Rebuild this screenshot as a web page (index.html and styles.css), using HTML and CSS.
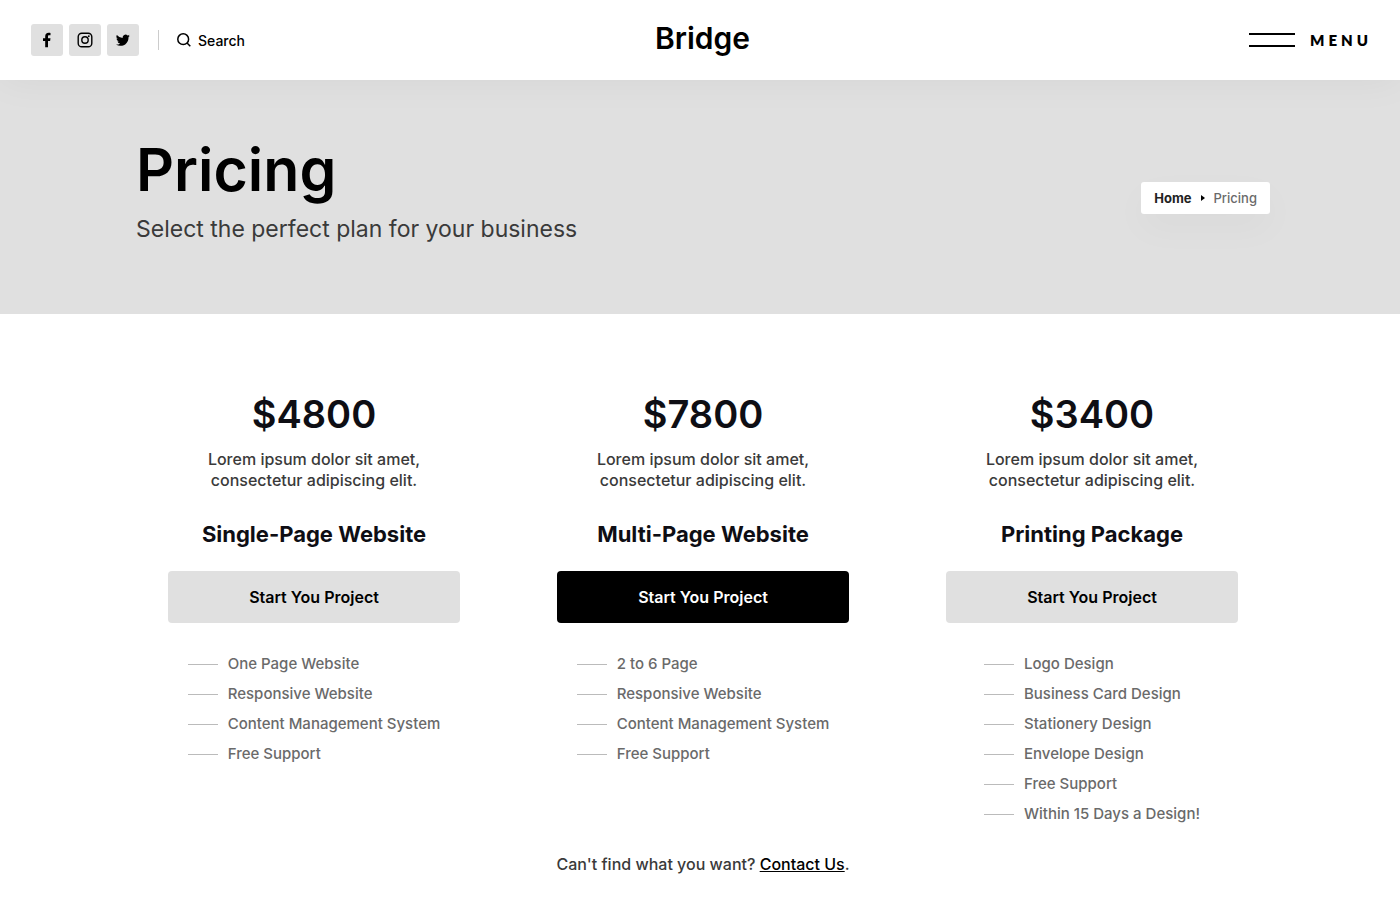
FILE: index.html
```html
<!DOCTYPE html>
<html lang="en">
<head>
<meta charset="utf-8">
<meta name="viewport" content="width=device-width, initial-scale=1">
<title>Pricing – Bridge</title>
<link rel="stylesheet" href="styles.css">
</head>
<body>
<header class="topbar">
  <div class="topbar-left">
    <nav class="social" aria-label="Social media">
      <a href="#" aria-label="Facebook"><svg width="16" height="16" viewBox="0 0 16 16"><path d="M6.200 15.200V9H4V6.300h2.200V4.400C6.200 2 7.500.8 9.600.8c1 0 1.700.1 1.900.1v2.300h-1.300c-1 0-1.200.5-1.200 1.200v1.900h2.500L11.100 9H9v6.200z"/></svg></a>
      <a href="#" aria-label="Instagram"><svg width="16" height="16" viewBox="0 0 16 16"><rect x="1.200" y="1.200" width="13.600" height="13.600" rx="3.600" fill="none" stroke="#000" stroke-width="1.400"/><circle cx="8" cy="8" r="3.200" fill="none" stroke="#000" stroke-width="1.400"/><circle cx="11.800" cy="4.200" r=".9"/></svg></a>
      <a href="#" aria-label="Twitter"><svg width="14" height="14" viewBox="0 0 24 24"><path d="M23.600 4.900a9.700 9.700 0 0 1-2.800.8 4.900 4.900 0 0 0 2.100-2.700 9.700 9.700 0 0 1-3.100 1.200 4.900 4.900 0 0 0-8.300 4.400A13.800 13.800 0 0 1 1.500 3.500a4.900 4.900 0 0 0 1.500 6.500 4.800 4.800 0 0 1-2.200-.6 4.900 4.900 0 0 0 3.900 4.900 4.900 4.900 0 0 1-2.200.1 4.900 4.900 0 0 0 4.600 3.400A9.800 9.800 0 0 1 0 19.800 13.800 13.800 0 0 0 7.500 22c9.100 0 14.200-7.700 13.900-14.600a10 10 0 0 0 2.200-2.500z"/></svg></a>
    </nav>
    <button class="search" type="button"><svg width="14" height="14" viewBox="0 0 14 14" fill="none" stroke="#000" stroke-width="1.500"><circle cx="6.200" cy="6.200" r="5.400"/><path d="M10 10l3.300 3.300"/></svg>Search</button>
  </div>
  <a class="logo" href="#">Bridge</a>
  <button class="menu" type="button"><span class="menu-lines"></span>MENU</button>
</header>
<section class="hero">
  <div class="hero-inner">
    <div>
      <h1>Pricing</h1>
      <p class="subtitle">Select the perfect plan for your business</p>
    </div>
    <nav class="breadcrumb" aria-label="Breadcrumb">
      <a href="#">Home</a>
      <svg width="4" height="6" viewBox="0 0 4 6"><path d="M0 0l4 3-4 3z"/></svg>
      <span>Pricing</span>
    </nav>
  </div>
</section>
<main class="main">
  <div class="plans">
    <article class="plan">
      <p class="price">$4800</p>
      <p class="desc">Lorem ipsum dolor sit amet, consectetur adipiscing elit.</p>
      <h2>Single-Page Website</h2>
      <button class="start" type="button">Start You Project</button>
      <ul>
        <li>One Page Website</li>
        <li>Responsive Website</li>
        <li>Content Management System</li>
        <li>Free Support</li>
      </ul>
    </article>
    <article class="plan">
      <p class="price">$7800</p>
      <p class="desc">Lorem ipsum dolor sit amet, consectetur adipiscing elit.</p>
      <h2>Multi-Page Website</h2>
      <button class="start start-dark" type="button">Start You Project</button>
      <ul>
        <li>2 to 6 Page</li>
        <li>Responsive Website</li>
        <li>Content Management System</li>
        <li>Free Support</li>
      </ul>
    </article>
    <article class="plan">
      <p class="price">$3400</p>
      <p class="desc">Lorem ipsum dolor sit amet, consectetur adipiscing elit.</p>
      <h2>Printing Package</h2>
      <button class="start" type="button">Start You Project</button>
      <ul>
        <li>Logo Design</li>
        <li>Business Card Design</li>
        <li>Stationery Design</li>
        <li>Envelope Design</li>
        <li>Free Support</li>
        <li>Within 15 Days a Design!</li>
      </ul>
    </article>
  </div>
  <p class="contact">Can't find what you want? <a href="#">Contact Us</a>.</p>
</main>
</body>
</html>
```
FILE: styles.css
```css
* { box-sizing: border-box; }
body, h1, h2, p, ul { margin: 0; padding: 0; }
body { font-family: Inter, "Liberation Sans", sans-serif; font-size: 16px; font-weight: 500; color: #3a3a3a; background: #fff; }
a { color: #000; }
button { font: inherit; color: #000; border: 0; background: none; padding: 0; cursor: pointer; }

.topbar { position: relative; z-index: 1; display: grid; grid-template-columns: 1fr auto 1fr; align-items: center; height: 80px; padding: 0 28px 0 31px; background: #fff; box-shadow: 0 0 40px rgba(0, 0, 0, .05); }
.topbar-left { display: flex; align-items: center; }
.social { display: flex; gap: 6px; padding-right: 19px; }
.social a { display: grid; place-items: center; width: 32px; height: 32px; border-radius: 3px; background: #e0e0e0; }
.search { display: flex; align-items: center; gap: 7px; height: 20px; padding-left: 18px; border-left: 1px solid #ccc; font-size: 14px; }
.logo { padding: 0 0 4px 2px; font-size: 30px; font-weight: 600; line-height: 40px; text-decoration: none; }
.menu { display: flex; align-items: center; gap: 15px; justify-self: end; font-family: Lato, sans-serif; font-size: 15px; font-weight: 800; letter-spacing: 4px; }
.menu-lines { width: 46px; height: 14px; border: solid #000; border-width: 2px 0; }

.hero { padding: 55px 130px 69px 136px; background: #e0e0e0; }
.hero-inner { display: flex; align-items: center; justify-content: space-between; }
h1 { font-size: 59px; font-weight: 600; line-height: 70px; color: #000; }
.subtitle { margin-top: 8px; font-size: 23px; font-weight: 400; line-height: 32px; }
.breadcrumb { display: flex; align-items: center; gap: 9px; height: 32px; margin-top: 16px; padding: 0 13px; border-radius: 3px; background: #fff; box-shadow: 0 14px 36px rgba(0, 0, 0, .03); font-size: 13px; color: #6a6a6a; }
.breadcrumb a { color: #222; font-weight: 700; text-decoration: none; }

.main { padding: 76px 162px 20px 168px; }
.plans { display: grid; grid-template-columns: repeat(3, 1fr); column-gap: 97px; }
.plan { display: flex; flex-direction: column; align-items: center; text-align: center; }
.price { font-size: 38px; font-weight: 600; line-height: 48px; color: #0e0e14; }
.desc { max-width: 230px; margin-top: 11px; line-height: 21px; }
h2 { margin-top: 27px; font-size: 22px; font-weight: 700; line-height: 32px; color: #0e0e14; }
.start { align-self: stretch; height: 52px; margin-top: 21px; border-radius: 4px; background: #e0e0e0; font-weight: 600; }
.start-dark { background: #000; color: #fff; }
.plan ul { margin-top: 26px; list-style: none; text-align: left; font-size: 15px; line-height: 30px; color: #6a6a6a; }
.plan li { display: flex; align-items: center; gap: 10px; }
.plan li::before { content: ""; width: 30px; height: 1px; background: #bbb; }
.contact { margin-top: 23px; text-align: center; line-height: 24px; }
```
